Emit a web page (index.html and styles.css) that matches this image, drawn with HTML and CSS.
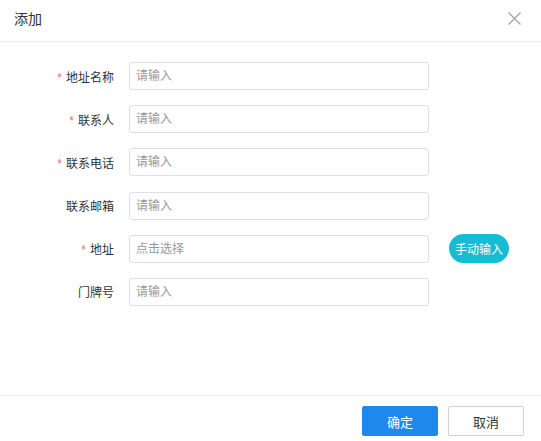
FILE: index.html
```html
<!DOCTYPE html>
<html lang="zh-CN">
<head>
  <meta charset="UTF-8" />
  <meta name="viewport" content="width=device-width, initial-scale=1.0" />
  <title>添加</title>
  <link rel="stylesheet" href="styles.css">
</head>
<body>
  <div class="dialog">
    <div class="dialog-header">
      <span class="dialog-title">添加</span>
      <span class="dialog-close">
        <svg width="13" height="13" viewBox="0 0 13 13">
          <path d="M0.5 0.5 L12.5 12.5 M12.5 0.5 L0.5 12.5" stroke="#a0a0a0" stroke-width="1.2" fill="none" />
        </svg>
      </span>
    </div>

    <div class="dialog-body">
      <div class="form-row">
        <label class="form-label"><i class="required">*</i>地址名称</label>
        <input class="form-input" type="text" placeholder="请输入">
      </div>
      <div class="form-row">
        <label class="form-label"><i class="required">*</i>联系人</label>
        <input class="form-input" type="text" placeholder="请输入">
      </div>
      <div class="form-row">
        <label class="form-label"><i class="required">*</i>联系电话</label>
        <input class="form-input" type="text" placeholder="请输入">
      </div>
      <div class="form-row">
        <label class="form-label">联系邮箱</label>
        <input class="form-input" type="text" placeholder="请输入">
      </div>
      <div class="form-row">
        <label class="form-label"><i class="required">*</i>地址</label>
        <input class="form-input" type="text" placeholder="点击选择" readonly>
        <button class="btn-manual">手动输入</button>
      </div>
      <div class="form-row">
        <label class="form-label">门牌号</label>
        <input class="form-input" type="text" placeholder="请输入">
      </div>
    </div>

    <div class="dialog-footer">
      <button class="btn btn-primary">确定</button>
      <button class="btn btn-default">取消</button>
    </div>
  </div>
</body>
</html>
```

FILE: styles.css
```css
* {
  box-sizing: border-box;
}

body {
  margin: 0;
  font-family: "Liberation Sans", "Noto Sans CJK SC", sans-serif;
  color: #333;
  background: #fff;
}

.dialog {
  height: 100vh;
  display: flex;
  flex-direction: column;
}

.dialog-header {
  height: 42px;
  display: flex;
  align-items: center;
  justify-content: space-between;
  padding: 0 20px 6px 14px;
  border-bottom: 1px solid #ebebeb;
}

.dialog-title {
  font-size: 14px;
  color: #303133;
}

.dialog-close {
  display: flex;
  cursor: pointer;
  margin-top: 2px;
}

.dialog-body {
  flex: 1;
  padding: 20px 0 0 14px;
  display: flex;
  flex-direction: column;
  gap: 15.2px;
}

.form-row {
  display: flex;
  align-items: center;
  height: 28px;
}

.form-label {
  width: 115px;
  padding-right: 15px;
  text-align: right;
  font-size: 12px;
  color: #333;
  flex-shrink: 0;
}

.required {
  font-style: normal;
  color: #f56c6c;
  margin-right: 4px;
}

.form-input {
  width: 300px;
  height: 28px;
  border: 1px solid #dcdfe6;
  border-radius: 3px;
  padding: 0 6px;
  font-size: 12px;
  font-family: inherit;
  color: #333;
  outline: none;
}

.form-input::placeholder {
  color: #999;
}

.btn-manual {
  margin-left: 20px;
  width: 60px;
  height: 29px;
  border: none;
  border-radius: 15px;
  background: #16bcd4;
  color: #fff;
  font-size: 12px;
  font-family: inherit;
  padding: 0;
  cursor: pointer;
}

.dialog-footer {
  display: flex;
  justify-content: flex-end;
  gap: 10px;
  padding: 10px 17px 5px;
  border-top: 1px solid #ebebeb;
}

.btn {
  width: 76px;
  height: 30px;
  border-radius: 2px;
  font-size: 13px;
  font-family: inherit;
  cursor: pointer;
}

.btn-primary {
  background: #1e88ee;
  border: 1px solid #1e88ee;
  color: #fff;
}

.btn-default {
  background: #fff;
  border: 1px solid #d0d0d0;
  color: #333;
}
```
